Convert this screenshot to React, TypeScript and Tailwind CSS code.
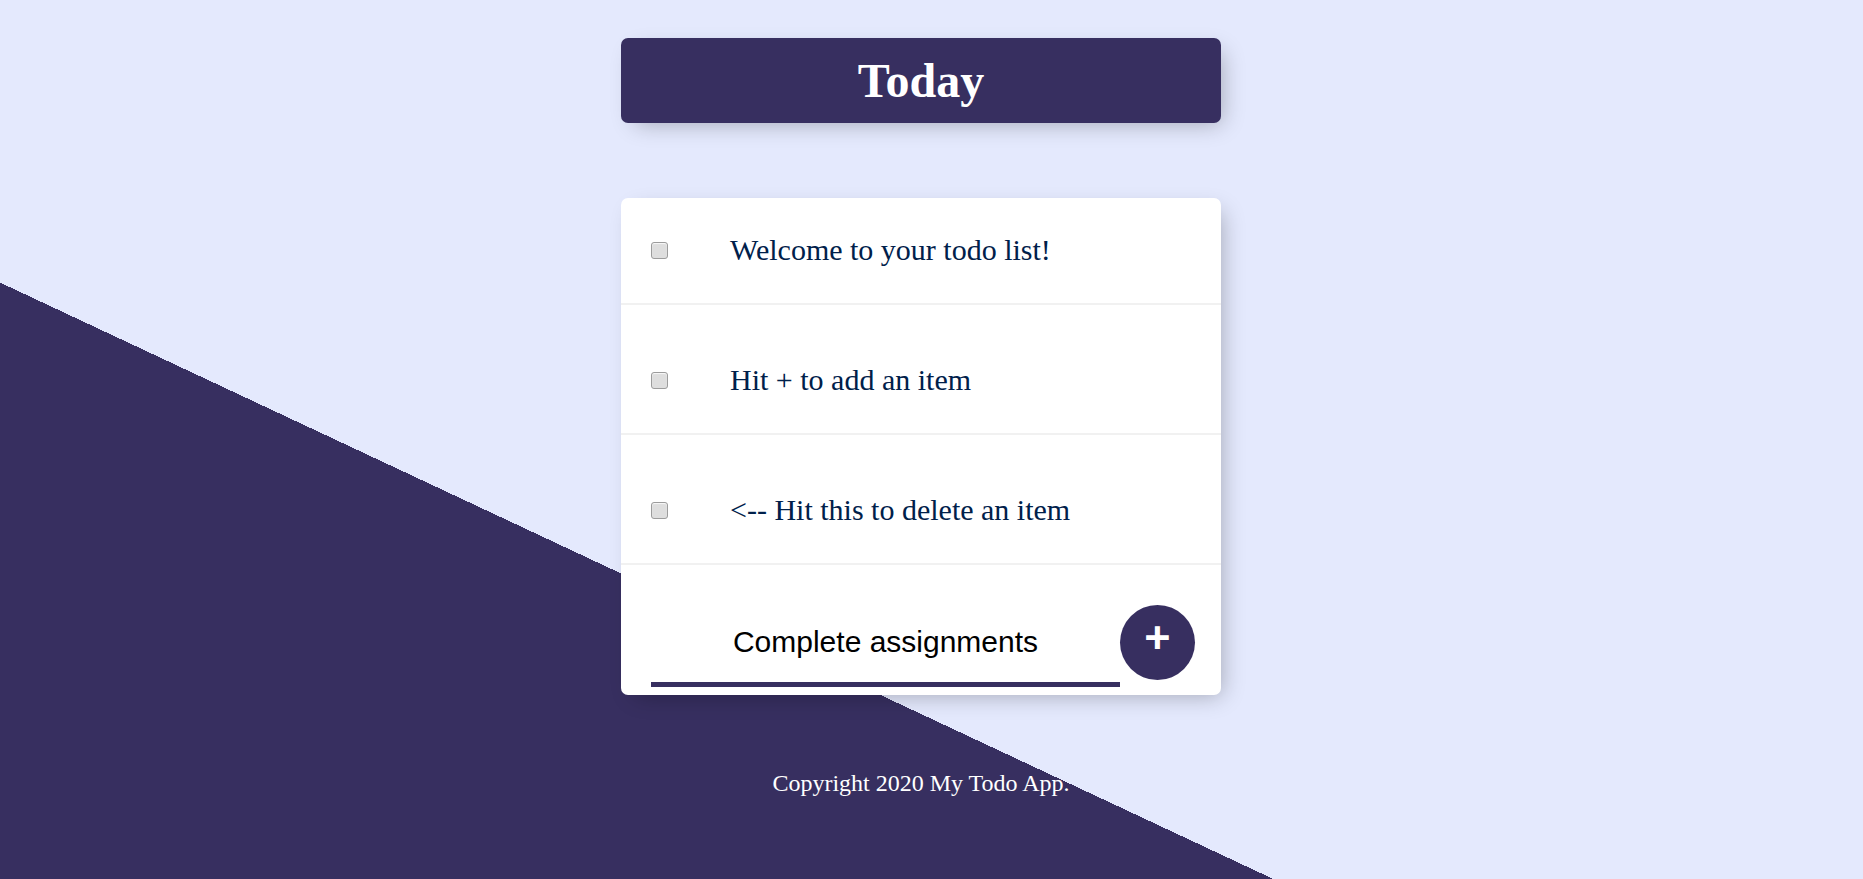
import { useState } from "react";

const items = [
  { text: "Welcome to your todo list!", first: true },
  { text: "Hit + to add an item", first: false },
  { text: "<-- Hit this to delete an item", first: false },
];

function TodoItem({ text, first }: { text: string; first: boolean }) {
  const [done, setDone] = useState(false);
  return (
    <div
      className={`border-b-2 border-[#f1f1f1] ${first ? "" : "pt-[23px]"}`}
    >
      <div className="flex h-[105px] items-center">
        <input
          type="checkbox"
          checked={done}
          onChange={() => setDone(!done)}
          className="ml-[30px] mr-[32px] h-[17px] w-[17px] shrink-0 appearance-none rounded-[3px] border border-[#9c9c9c] bg-[#dedede] shadow-[inset_0_1px_1px_rgba(255,255,255,0.8)]"
        />
        <p
          className={`m-0 px-[30px] text-[30px] leading-[1.15] text-[#00204a] ${
            done ? "line-through decoration-[#372f60]" : ""
          }`}
        >
          {text}
        </p>
      </div>
    </div>
  );
}

export default function App() {
  const [newItem, setNewItem] = useState("Complete assignments");

  return (
    <div className="flex min-h-screen flex-col items-center bg-[linear-gradient(25.1deg,#372f60_34.05%,#e4e9fd_34.05%)] pr-[21px] pt-[38px] font-['Liberation_Serif',serif]">
      <div className="w-[600px] rounded-[7px] bg-[#372f60] shadow-[7px_7px_22px_-7px_rgba(0,0,0,0.3)]">
        <h1 className="py-[15px] text-center text-[48px] font-bold leading-[1.15] text-white">
          Today
        </h1>
      </div>

      <div className="mt-[75px] w-[600px] rounded-[7px] bg-white shadow-[7px_7px_22px_-7px_rgba(0,0,0,0.3)]">
        {items.map((item) => (
          <TodoItem key={item.text} text={item.text} first={item.first} />
        ))}

        <form
          onSubmit={(e) => e.preventDefault()}
          className="ml-[30px] flex items-center pb-[8px] pt-[32px]"
        >
          <input
            type="text"
            value={newItem}
            onChange={(e) => setNewItem(e.target.value)}
            className="h-[90px] w-[469px] bg-transparent text-center font-['Liberation_Sans',sans-serif] text-[30px] text-black shadow-[inset_0_-5px_0_0_#372f60] outline-none"
          />
          <button
            type="submit"
            className="flex h-[75px] w-[75px] shrink-0 items-center justify-center rounded-full bg-[#372f60] pb-[9px] font-['Liberation_Sans',sans-serif] text-[45px] font-bold leading-none text-white"
          >
            +
          </button>
        </form>
      </div>

      <footer className="mt-[75px] text-center text-[24px] leading-[1.15] text-white">
        Copyright 2020 My Todo App.
      </footer>
    </div>
  );
}
